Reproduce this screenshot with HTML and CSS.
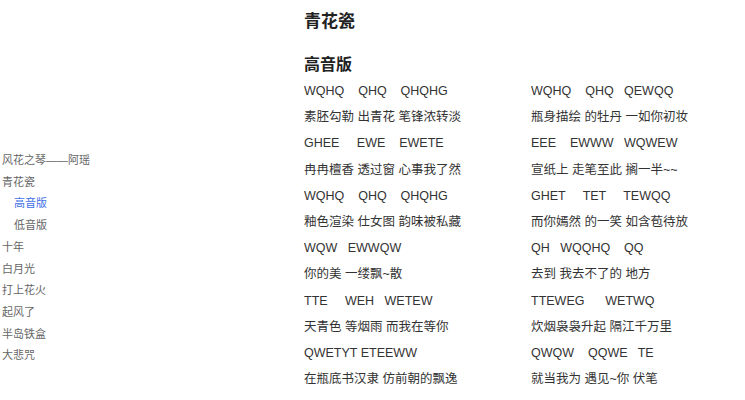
FILE: index.html
```html
<!DOCTYPE html>
<html lang="zh">
<head>
<meta charset="utf-8">
<link rel="stylesheet" href="styles.css">
</head>
<body>
<div class="page">
  <nav class="toc">
    <a class="toc-item">风花之琴——阿瑶</a>
    <a class="toc-item">青花瓷</a>
    <a class="toc-item sub active">高音版</a>
    <a class="toc-item sub">低音版</a>
    <a class="toc-item">十年</a>
    <a class="toc-item">白月光</a>
    <a class="toc-item">打上花火</a>
    <a class="toc-item">起风了</a>
    <a class="toc-item">半岛铁盒</a>
    <a class="toc-item">大悲咒</a>
  </nav>
  <main class="content">
    <h1 class="title">青花瓷</h1>
    <h2 class="subtitle">高音版</h2>
    <div class="score">
      <div class="col">
        <p class="line">WQHQ    QHQ    QHQHG</p>
        <p class="line">素胚勾勒 出青花 笔锋浓转淡</p>
        <p class="line">GHEE     EWE    EWETE</p>
        <p class="line">冉冉檀香 透过窗 心事我了然</p>
        <p class="line">WQHQ    QHQ    QHQHG</p>
        <p class="line">釉色渲染 仕女图 韵味被私藏</p>
        <p class="line">WQW   EWWQW</p>
        <p class="line">你的美 一缕飘~散</p>
        <p class="line">TTE     WEH   WETEW</p>
        <p class="line">天青色 等烟雨 而我在等你</p>
        <p class="line">QWETYT ETEEWW</p>
        <p class="line">在瓶底书汉隶 仿前朝的飘逸</p>
      </div>
      <div class="col">
        <p class="line">WQHQ    QHQ   QEWQQ</p>
        <p class="line">瓶身描绘 的牡丹 一如你初妆</p>
        <p class="line">EEE    EWWW   WQWEW</p>
        <p class="line">宣纸上 走笔至此 搁一半~~</p>
        <p class="line">GHET     TET     TEWQQ</p>
        <p class="line">而你嫣然 的一笑 如含苞待放</p>
        <p class="line">QH   WQQHQ    QQ</p>
        <p class="line">去到 我去不了的 地方</p>
        <p class="line">TTEWEG      WETWQ</p>
        <p class="line">炊烟袅袅升起 隔江千万里</p>
        <p class="line">QWQW    QQWE   TE</p>
        <p class="line">就当我为 遇见~你 伏笔</p>
      </div>
    </div>
  </main>
</div>
</body>
</html>
```
FILE: styles.css
```css
html, body {
  margin: 0;
  padding: 0;
  background: #ffffff;
}
body {
  font-family: "Liberation Sans", "Noto Sans CJK SC", sans-serif;
  color: #333333;
}
.page {
  display: grid;
  grid-template-columns: 304px 1fr;
  width: 745px;
  height: 400px;
  overflow: hidden;
}
.toc {
  display: flex;
  flex-direction: column;
  padding-top: 150px;
  padding-left: 2px;
}
.toc-item {
  display: block;
  font-size: 11px;
  line-height: 21.7px;
  color: #666666;
  text-decoration: none;
  white-space: nowrap;
}
.toc-item.sub {
  padding-left: 12px;
}
.toc-item.active {
  color: #3f6fe8;
}
.content {
  padding-top: 10px;
}
.title {
  margin: 0;
  font-size: 17px;
  line-height: 24px;
  font-weight: bold;
  color: #222222;
}
.subtitle {
  margin: 19px 0 1px;
  font-size: 16px;
  line-height: 24px;
  font-weight: bold;
  color: #222222;
}
.score {
  display: grid;
  grid-template-columns: 227px 1fr;
}
.line {
  margin: 0;
  font-size: 12.5px;
  line-height: 26.2px;
  white-space: pre;
  color: #333333;
}
```
